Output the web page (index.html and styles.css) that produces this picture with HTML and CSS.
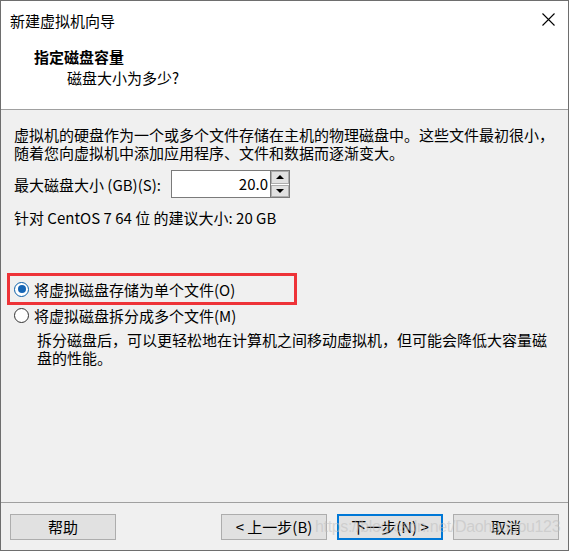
FILE: index.html
```html
<!DOCTYPE html>
<html lang="zh-CN">
<head>
<meta charset="utf-8">
<title>新建虚拟机向导</title>
<link rel="stylesheet" href="styles.css">
</head>
<body>
<div class="window">
  <header class="header">
    <div class="titlebar">
      <span class="title">新建虚拟机向导</span>
      <svg class="close" width="13" height="13" viewBox="0 0 13 13" aria-hidden="true">
        <path d="M0.5 0.5 L12.5 12.5 M12.5 0.5 L0.5 12.5" stroke="#000" stroke-width="1.1" fill="none"/>
      </svg>
    </div>
    <div class="heading">指定磁盘容量</div>
    <div class="subheading">磁盘大小为多少?</div>
  </header>

  <main class="content">
    <p class="intro">虚拟机的硬盘作为一个或多个文件存储在主机的物理磁盘中。这些文件最初很小，<br>随着您向虚拟机中添加应用程序、文件和数据而逐渐变大。</p>

    <div class="size-row">
      <span class="label">最大磁盘大小 (GB)(S):</span>
      <div class="spin">
        <div class="spin-field">20.0</div>
        <div class="spin-btns">
          <div class="spin-btn"><span class="arrow-up"></span></div>
          <div class="spin-btn"><span class="arrow-down"></span></div>
        </div>
      </div>
    </div>

    <p class="recommend">针对 CentOS 7 64 位 的建议大小: 20 GB</p>

    <div class="radio-row first">
      <span class="radio checked"><span class="dot"></span></span>
      <span>将虚拟磁盘存储为单个文件(O)</span>
    </div>
    <div class="radio-row">
      <span class="radio"></span>
      <span>将虚拟磁盘拆分成多个文件(M)</span>
    </div>
    <p class="desc">拆分磁盘后，可以更轻松地在计算机之间移动虚拟机，但可能会降低大容量磁<br>盘的性能。</p>
  </main>

  <footer class="footer">
    <button class="btn">帮助</button>
    <div class="btn-group">
      <button class="btn">&lt; 上一步(B)</button>
      <button class="btn primary">下一步(N) &gt;</button>
      <button class="btn">取消</button>
    </div>
  </footer>

  <div class="highlight"></div>
  <div class="watermark">https://blog.csdn.net/Daohaogou123</div>
</div>
</body>
</html>
```

FILE: styles.css
```css
html, body {
  margin: 0;
  padding: 0;
  background: #ffffff;
}

body {
  font-family: "Noto Sans CJK SC", "Noto Sans", sans-serif;
  font-size: 15px;
  color: #000;
}

.window {
  position: relative;
  box-sizing: border-box;
  width: 569px;
  height: 551px;
  border: 1px solid #6e6e6e;
  display: flex;
  flex-direction: column;
  background: #f0f0f0;
  overflow: hidden;
}

.header {
  background: #ffffff;
  height: 108px;
  border-bottom: 1px solid #a0a0a0;
  flex: none;
}

.titlebar {
  display: flex;
  justify-content: space-between;
  align-items: center;
  height: 20px;
  padding: 10px 13px 0 9px;
}

.title {
  line-height: 20px;
  white-space: nowrap;
}

.close {
  display: block;
  margin-top: -3px;
}

.heading {
  margin-top: 15px;
  padding-left: 33px;
  font-weight: bold;
  line-height: 21px;
}

.subheading {
  padding-left: 66px;
  line-height: 21px;
}

.content {
  flex: 1;
  padding: 16px 0 0 13px;
}

.intro,
.recommend,
.desc {
  margin: 0;
  line-height: 18px;
  white-space: nowrap;
}

.size-row {
  display: flex;
  align-items: center;
  margin-top: 8px;
  height: 28px;
}

.label {
  width: 157px;
  white-space: nowrap;
}

.spin {
  display: flex;
  box-sizing: border-box;
  width: 119px;
  height: 28px;
  border: 1px solid #7a7a7a;
  background: #fff;
}

.spin-field {
  flex: 1;
  text-align: right;
  line-height: 25px;
  padding-right: 2px;
  border-right: 1px solid #7a7a7a;
}

.spin-btns {
  width: 18px;
  display: flex;
  flex-direction: column;
  gap: 1px;
  padding: 0;
}

.spin-btn {
  flex: 1;
  display: flex;
  align-items: center;
  justify-content: center;
  background: #e1e1e1;
  border: 1px solid #adadad;
  box-sizing: border-box;
}

.arrow-up,
.arrow-down {
  width: 0;
  height: 0;
  border-left: 4px solid transparent;
  border-right: 4px solid transparent;
}

.arrow-up {
  border-bottom: 4px solid #000;
}

.arrow-down {
  border-top: 4px solid #000;
}

.recommend {
  margin-top: 11px;
}

.radio-row {
  display: flex;
  align-items: center;
  gap: 5px;
  height: 26px;
  white-space: nowrap;
}

.radio-row.first {
  margin-top: 49px;
}

.radio {
  box-sizing: border-box;
  width: 15px;
  height: 15px;
  border-radius: 50%;
  border: 1px solid #333;
  background: #fff;
  display: flex;
  align-items: center;
  justify-content: center;
}

.radio.checked {
  border-color: #0a5ea8;
}

.dot {
  width: 8px;
  height: 8px;
  border-radius: 50%;
  background: #1565b5;
}

.desc {
  margin-top: 3px;
  padding-left: 23px;
}

.footer {
  flex: none;
  box-sizing: border-box;
  height: 48px;
  border-top: 1px solid #a0a0a0;
  display: flex;
  align-items: flex-start;
  justify-content: space-between;
  padding: 11px 9px 0 9px;
}

.btn-group {
  display: flex;
  gap: 10px;
}

.btn {
  box-sizing: border-box;
  width: 106px;
  height: 26px;
  margin: 0;
  padding: 0;
  background: #e1e1e1;
  border: 1px solid #adadad;
  font-family: "Noto Sans CJK SC", "Noto Sans", sans-serif;
  font-size: 15px;
  line-height: 22px;
  color: #000;
  white-space: nowrap;
}

.btn.primary {
  border: 2px solid #0078d7;
}

.highlight {
  position: absolute;
  left: 6px;
  top: 272px;
  width: 290px;
  height: 32px;
  box-sizing: border-box;
  border: 3px solid #ee3338;
}

.watermark {
  position: absolute;
  left: 314px;
  top: 517px;
  font-family: "Liberation Sans", Arial, sans-serif;
  font-size: 16px;
  letter-spacing: -0.35px;
  color: rgba(190, 190, 190, 0.55);
  white-space: nowrap;
  pointer-events: none;
}
```
